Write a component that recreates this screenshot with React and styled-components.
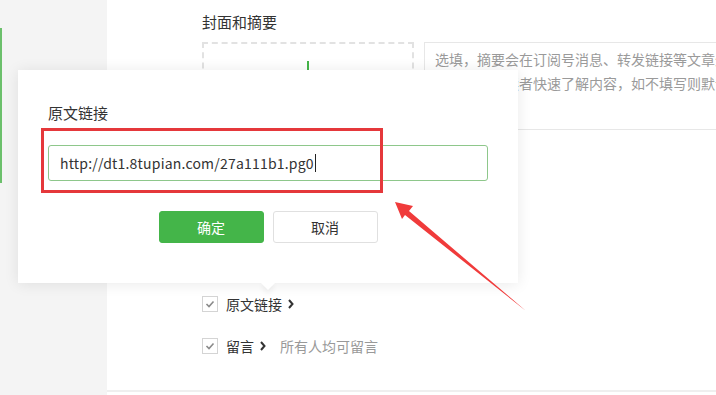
import React from 'react';
import styled, {createGlobalStyle} from "styled-components";

const GlobalStyle = createGlobalStyle`
  html, body {
    margin: 0;
    padding: 0;
    overflow: hidden;
    background: #f4f4f4;
    font-family: "Noto Sans CJK SC", "Liberation Sans", sans-serif;
    color: #333;
  }
`

const Stage = styled.div`
    position: relative;
    display: flex;
    width: 716px;
    height: 395px;
    overflow: hidden;
`

const Sidebar = styled.div`
    width: 107px;
    flex: 0 0 107px;
    background: #f4f4f4;
    .navItem{
      margin-top: 28px;
      height: 155px;
      border-left: 2px solid #6cc06c;
    }
`

const Main = styled.div`
    flex: 1;
    height: 395px;
    background: #fff;
    padding: 12px 0 0 95px;
    box-sizing: border-box;
`

const SectionTitle = styled.div`
    font-size: 15px;
    line-height: 20px;
    color: #333;
`

const CoverRow = styled.div`
    display: flex;
    gap: 10px;
    margin-top: 10px;
    height: 88px;
`

const CoverBox = styled.div`
    width: 212px;
    flex: 0 0 212px;
    box-sizing: border-box;
    border: 2px dashed #e2e2e2;
    display: flex;
    justify-content: center;
    padding-top: 17px;
    .plus{
      width: 2px;
      height: 20px;
      background: #44b549;
    }
`

const Digest = styled.div`
    width: 330px;
    flex: 0 0 330px;
    box-sizing: border-box;
    border: 1px solid #e7e7e7;
    padding: 4px 12px 0 10px;
    font-size: 14px;
    line-height: 24px;
    color: #9a9a9a;
    overflow: hidden;
`

const Options = styled.div`
    margin-top: 164px;
    display: flex;
    flex-direction: column;
    gap: 22px;
`

const OptionRow = styled.div`
    display: flex;
    align-items: center;
    height: 20px;
    font-size: 14px;
    color: #333;
    .hint{
      color: #999;
      margin-left: 14px;
    }
`

const CheckBox = styled.span`
    width: 16px;
    height: 16px;
    box-sizing: border-box;
    border: 1px solid #d4d4d4;
    display: inline-flex;
    align-items: center;
    justify-content: center;
    margin-right: 8px;
`

const Chevron = styled.svg`
    margin-left: 6px;
    width: 6px;
    height: 10px;
`

const Divider = styled.div`
    margin: 34px 0 0 -95px;
    height: 2px;
    background: #efefef;
`

const Popup = styled.div`
    position: absolute;
    left: 18px;
    top: 70px;
    width: 500px;
    height: 213px;
    box-sizing: border-box;
    background: #fff;
    box-shadow: 0 1px 14px rgba(0, 0, 0, 0.09);
    padding: 33px 30px 0 30px;
    &::after{
      content: "";
      position: absolute;
      left: 245px;
      bottom: -5px;
      width: 10px;
      height: 10px;
      background: #fff;
      transform: rotate(45deg);
      box-shadow: 3px 3px 5px rgba(0, 0, 0, 0.05);
    }
`

const PopupTitle = styled.div`
    font-size: 15px;
    line-height: 20px;
    color: #333;
`

const LinkInput = styled.div`
    margin-top: 22px;
    width: 440px;
    height: 36px;
    box-sizing: border-box;
    border: 1px solid #8ec78b;
    border-radius: 3px;
    padding: 0 10px 0 11px;
    display: flex;
    align-items: center;
    font-size: 14px;
    letter-spacing: 0.2px;
    color: #333;
    .caret{
      width: 1px;
      height: 18px;
      background: #222;
      margin-left: 1px;
    }
`

const Actions = styled.div`
    margin-top: 30px;
    display: flex;
    justify-content: center;
    gap: 9px;
`

const Button = styled.button`
    width: 105px;
    height: 32px;
    box-sizing: border-box;
    border-radius: 3px;
    font-family: "Noto Sans CJK SC", sans-serif;
    font-size: 14px;
    border: 1px solid ${p => p.$primary ? '#44b549' : '#e0e0e0'};
    background: ${p => p.$primary ? '#44b549' : '#fff'};
    color: ${p => p.$primary ? '#fff' : '#333'};
    padding: 0;
`

const Highlight = styled.div`
    position: absolute;
    left: 41px;
    top: 128px;
    width: 342px;
    height: 65px;
    box-sizing: border-box;
    border: 3px solid #e5383b;
`

const Pointer = styled.svg`
    position: absolute;
    left: 0;
    top: 0;
    width: 716px;
    height: 395px;
    pointer-events: none;
`

const Check = () => (
    <CheckBox>
        <svg width="10" height="8" viewBox="0 0 10 8">
            <polyline points="1.5,4 4,6.5 8.5,1.5" fill="none" stroke="#8a8a8a" strokeWidth="1.6"/>
        </svg>
    </CheckBox>
)

const Arrow = () => (
    <Chevron viewBox="0 0 6 10">
        <polyline points="1,1 4.5,5 1,9" fill="none" stroke="#333" strokeWidth="2"/>
    </Chevron>
)

const App = () => {
    return (
        <Stage>
            <GlobalStyle/>
            <Sidebar>
                <div className="navItem"/>
            </Sidebar>
            <Main>
                <SectionTitle>封面和摘要</SectionTitle>
                <CoverRow>
                    <CoverBox><div className="plus"/></CoverBox>
                    <Digest>选填，摘要会在订阅号消息、转发链接等文章外透出，帮助读者快速了解内容，如不填写则默认抓取</Digest>
                </CoverRow>
                <Options>
                    <OptionRow><Check/>原文链接<Arrow/></OptionRow>
                    <OptionRow><Check/>留言<Arrow/><span className="hint">所有人均可留言</span></OptionRow>
                </Options>
                <Divider/>
            </Main>

            <Popup>
                <PopupTitle>原文链接</PopupTitle>
                <LinkInput>http://dt1.8tupian.com/27a111b1.pg0<span className="caret"/></LinkInput>
                <Actions>
                    <Button $primary>确定</Button>
                    <Button>取消</Button>
                </Actions>
            </Popup>

            <Highlight/>
            <Pointer viewBox="0 0 716 395">
                <polygon points="395,202 413,206 409,211 526,311 405,215 402,219" fill="#f03b3b"/>
            </Pointer>
        </Stage>
    );
};

export default App;
